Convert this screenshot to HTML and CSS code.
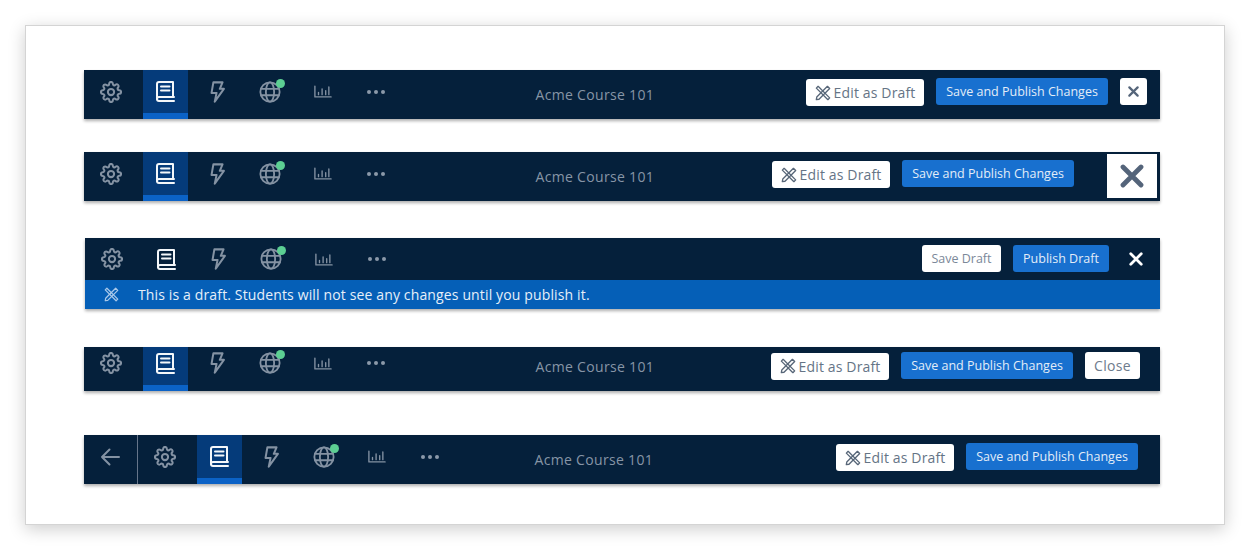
FILE: index.html
```html
<!DOCTYPE html>
<html lang="en">
<head>
    <meta charset="utf-8">
    <title>Course toolbar variations</title>
    <link rel="stylesheet" href="styles.css">
</head>
<body>
    <svg class="sprites" width="0" height="0" aria-hidden="true">
        <symbol id="i-gear" viewBox="0 0 24 24">
            <circle cx="12" cy="12" r="3.4"/>
            <path d="M19.4 15a1.65 1.65 0 0 0 .33 1.82l.06.06a2 2 0 0 1 0 2.83 2 2 0 0 1-2.83 0l-.06-.06a1.65 1.65 0 0 0-1.82-.33 1.65 1.65 0 0 0-1 1.51V21a2 2 0 0 1-2 2 2 2 0 0 1-2-2v-.09A1.65 1.65 0 0 0 9 19.4a1.65 1.65 0 0 0-1.82.33l-.06.06a2 2 0 0 1-2.83 0 2 2 0 0 1 0-2.83l.06-.06a1.65 1.65 0 0 0 .33-1.82 1.65 1.65 0 0 0-1.51-1H3a2 2 0 0 1-2-2 2 2 0 0 1 2-2h.09A1.65 1.65 0 0 0 4.6 9a1.65 1.65 0 0 0-.33-1.82l-.06-.06a2 2 0 0 1 0-2.83 2 2 0 0 1 2.83 0l.06.06a1.65 1.65 0 0 0 1.82.33H9a1.65 1.65 0 0 0 1-1.51V3a2 2 0 0 1 2-2 2 2 0 0 1 2 2v.09a1.65 1.65 0 0 0 1 1.51 1.65 1.65 0 0 0 1.82-.33l.06-.06a2 2 0 0 1 2.83 0 2 2 0 0 1 0 2.83l-.06.06a1.65 1.65 0 0 0-.33 1.82V9a1.65 1.65 0 0 0 1.51 1H21a2 2 0 0 1 2 2 2 2 0 0 1-2 2h-.09a1.65 1.65 0 0 0-1.51 1z"/>
        </symbol>
        <symbol id="i-book" viewBox="0 0 20 21">
            <path d="M19 16H4a2 2 0 0 0 0 4h15"/>
            <path d="M2 18V3a2 2 0 0 1 2-2h14v15"/>
            <path d="M6 5.500h8.500M6 9.500h8.500"/>
        </symbol>
        <symbol id="i-bolt" viewBox="0 0 16 24">
            <path d="M3.500 1.500h10l-3 7h4.500L5 22.500l2-9.500H1.500z"/>
        </symbol>
        <symbol id="i-globe" viewBox="0 0 24 24">
            <circle cx="12" cy="12" r="10.500"/>
            <path d="M2.500 8.500h19M2.500 15.500h19"/>
            <ellipse cx="12" cy="12" rx="4.500" ry="10.500"/>
        </symbol>
        <symbol id="i-chart" viewBox="0 0 20 14">
            <path d="M1 1v12h18"/>
            <path d="M5 10.500V8M9 10.500V4M13 10.500V6M16.500 10.500V2"/>
        </symbol>
        <symbol id="i-tools" viewBox="0 0 18 18">
            <path d="M3.500 1.500l13 13-2 2-13-13z"/>
            <path d="M14 1.500l2.500 2.500L4.500 16l-3 .500.500-3z"/>
        </symbol>
        <symbol id="i-close" viewBox="0 0 12 12">
            <path d="M1.500 1.500l9 9M10.500 1.500l-9 9"/>
        </symbol>
        <symbol id="i-back" viewBox="0 0 20 18">
            <path d="M19 9H2M9.500 1.500L2 9l7.500 7.500"/>
        </symbol>
    </svg>

    <div class="card">

        <div class="bar first">
            <nav class="tabs">
                <a class="tab"><svg class="ico gear"><use href="#i-gear"/></svg></a>
                <a class="tab active"><svg class="ico book"><use href="#i-book"/></svg></a>
                <a class="tab"><svg class="ico bolt"><use href="#i-bolt"/></svg></a>
                <a class="tab"><span class="globe"><svg class="ico globe-ico"><use href="#i-globe"/></svg><i class="dot"></i></span></a>
                <a class="tab"><svg class="ico chart"><use href="#i-chart"/></svg></a>
                <a class="tab"><span class="dots"><i></i><i></i><i></i></span></a>
            </nav>
            <div class="title">Acme Course 101</div>
            <div class="actions">
                <button class="btn draft"><svg class="ico tools"><use href="#i-tools"/></svg>Edit as Draft</button>
                <button class="btn primary">Save and Publish Changes</button>
                <button class="btn square"><svg class="ico x-small"><use href="#i-close"/></svg></button>
            </div>
        </div>

        <div class="bar second">
            <nav class="tabs">
                <a class="tab"><svg class="ico gear"><use href="#i-gear"/></svg></a>
                <a class="tab active"><svg class="ico book"><use href="#i-book"/></svg></a>
                <a class="tab"><svg class="ico bolt"><use href="#i-bolt"/></svg></a>
                <a class="tab"><span class="globe"><svg class="ico globe-ico"><use href="#i-globe"/></svg><i class="dot"></i></span></a>
                <a class="tab"><svg class="ico chart"><use href="#i-chart"/></svg></a>
                <a class="tab"><span class="dots"><i></i><i></i><i></i></span></a>
            </nav>
            <div class="title">Acme Course 101</div>
            <div class="actions">
                <button class="btn draft"><svg class="ico tools"><use href="#i-tools"/></svg>Edit as Draft</button>
                <button class="btn primary">Save and Publish Changes</button>
                <button class="bigclose"><svg class="ico x-big"><use href="#i-close"/></svg></button>
            </div>
        </div>

        <div class="third">
            <div class="bar editing">
                <nav class="tabs">
                    <a class="tab"><svg class="ico gear"><use href="#i-gear"/></svg></a>
                    <a class="tab current"><svg class="ico book"><use href="#i-book"/></svg></a>
                    <a class="tab"><svg class="ico bolt"><use href="#i-bolt"/></svg></a>
                    <a class="tab"><span class="globe"><svg class="ico globe-ico"><use href="#i-globe"/></svg><i class="dot"></i></span></a>
                    <a class="tab"><svg class="ico chart"><use href="#i-chart"/></svg></a>
                    <a class="tab"><span class="dots"><i></i><i></i><i></i></span></a>
                </nav>
                <div class="actions">
                    <button class="btn plain">Save Draft</button>
                    <button class="btn primary short">Publish Draft</button>
                    <svg class="ico x-white"><use href="#i-close"/></svg>
                </div>
            </div>
            <div class="notice">
                <svg class="ico tools-light"><use href="#i-tools"/></svg>
                <span>This is a draft. Students will not see any changes until you publish it.</span>
            </div>
        </div>

        <div class="bar fourth">
            <nav class="tabs">
                <a class="tab"><svg class="ico gear"><use href="#i-gear"/></svg></a>
                <a class="tab active"><svg class="ico book"><use href="#i-book"/></svg></a>
                <a class="tab"><svg class="ico bolt"><use href="#i-bolt"/></svg></a>
                <a class="tab"><span class="globe"><svg class="ico globe-ico"><use href="#i-globe"/></svg><i class="dot"></i></span></a>
                <a class="tab"><svg class="ico chart"><use href="#i-chart"/></svg></a>
                <a class="tab"><span class="dots"><i></i><i></i><i></i></span></a>
            </nav>
            <div class="title">Acme Course 101</div>
            <div class="actions">
                <button class="btn draft"><svg class="ico tools"><use href="#i-tools"/></svg>Edit as Draft</button>
                <button class="btn primary">Save and Publish Changes</button>
                <button class="btn closetext">Close</button>
            </div>
        </div>

        <div class="bar fifth">
            <a class="back"><svg class="ico arrow"><use href="#i-back"/></svg></a>
            <nav class="tabs">
                <a class="tab"><svg class="ico gear"><use href="#i-gear"/></svg></a>
                <a class="tab active"><svg class="ico book"><use href="#i-book"/></svg></a>
                <a class="tab"><svg class="ico bolt"><use href="#i-bolt"/></svg></a>
                <a class="tab"><span class="globe"><svg class="ico globe-ico"><use href="#i-globe"/></svg><i class="dot"></i></span></a>
                <a class="tab"><svg class="ico chart"><use href="#i-chart"/></svg></a>
                <a class="tab"><span class="dots"><i></i><i></i><i></i></span></a>
            </nav>
            <div class="title">Acme Course 101</div>
            <div class="actions">
                <button class="btn draft"><svg class="ico tools"><use href="#i-tools"/></svg>Edit as Draft</button>
                <button class="btn primary">Save and Publish Changes</button>
            </div>
        </div>

    </div>
</body>
</html>
```

FILE: styles.css
```css
body {
    margin: 0;
    min-height: 550px;
    background: #fff;
    font-family: "Open Sans", "Noto Sans", sans-serif;
}

.sprites {
    display: block;
    height: 0;
}

.card {
    box-sizing: border-box;
    width: 1200px;
    height: 500px;
    margin: 25px 0 0 25px;
    padding: 44px 64px 0 58px;
    background: #fff;
    border: 1px solid #d4d4d4;
    box-shadow: 0 4px 16px rgba(0, 0, 0, .2);
}

.bar {
    display: flex;
    align-items: center;
    height: 49px;
    background: #05203b;
    box-shadow: 0 2px 3px rgba(0, 0, 0, .32);
}

.second { margin-top: 33px; }
.fourth { margin-top: 38px; height: 44px; }
.fifth { margin-top: 44px; }

.third {
    margin: 37px 0 0 1px;
    box-shadow: 0 2px 3px rgba(0, 0, 0, .32);
}

.editing {
    height: 42px;
    box-shadow: none;
}

/* tabs */
.tabs {
    display: flex;
    align-self: stretch;
    gap: 8px;
    padding-left: 4.500px;
}

.tab {
    display: flex;
    align-items: center;
    justify-content: center;
    box-sizing: border-box;
    width: 45px;
    border-bottom: 6px solid transparent;
}

.fourth .tab {
    padding-bottom: 6px;
}

.editing .tab {
    border-bottom: 0;
}

.active {
    margin: 0 -1px 0 1px;
    background: #053b7a;
    border-bottom-color: #0b62c6;
}

.current {
    margin: 0 -1px 0 1px;
}

.ico {
    display: block;
    fill: none;
    stroke: #8492a3;
    stroke-width: 2;
    stroke-linecap: round;
    stroke-linejoin: round;
}

.gear { width: 22px; height: 22px; stroke-width: 2.200; }
.book { width: 20px; height: 21px; stroke: #f4f7fa; }
.bolt { width: 15px; height: 22px; stroke-width: 2.200; }
.globe-ico { width: 22px; height: 22px; stroke-width: 2; }
.chart { width: 18px; height: 13px; stroke-width: 1.500; }

.globe {
    position: relative;
    display: block;
}

.dot {
    position: absolute;
    top: -2px;
    right: -4px;
    width: 9px;
    height: 9px;
    border-radius: 50%;
    background: #5ccf93;
}

.dots {
    display: flex;
    gap: 3px;
}

.dots i {
    width: 4px;
    height: 4px;
    border-radius: 50%;
    background: #8c99a9;
}

.title {
    margin-left: 137px;
    color: #8795a6;
    font-size: 14px;
    letter-spacing: .32px;
}

.fourth .title {
    padding-bottom: 6px;
}

.fifth .title {
    margin-left: 82px;
}

/* buttons */
.actions {
    display: flex;
    align-items: center;
    margin-left: auto;
    gap: 12px;
    padding: 0 13px 6px 0;
}

.btn {
    box-sizing: border-box;
    height: 27px;
    padding: 0;
    border: 1px solid transparent;
    border-radius: 3px;
    font-family: inherit;
    white-space: nowrap;
}

.draft {
    display: flex;
    align-items: center;
    justify-content: center;
    gap: 3px;
    width: 118px;
    margin-top: 2px;
    background: #fff;
    color: #657486;
    font-size: 14px;
    letter-spacing: .15px;
}

.tools {
    width: 16px;
    height: 16px;
    stroke: #576678;
    stroke-width: 1.500;
}

.primary {
    width: 172px;
    background: #1870cf;
    color: #e3edf8;
    font-size: 12.500px;
}

.short {
    width: 96px;
}

.plain {
    width: 79px;
    background: #fff;
    color: #7b8899;
    font-size: 12.500px;
}

.square {
    display: flex;
    align-items: center;
    justify-content: center;
    width: 27px;
    background: #fff;
}

.x-small {
    width: 11px;
    height: 11px;
    stroke: #55657a;
    stroke-width: 2.400;
}

.bigclose {
    display: flex;
    align-items: center;
    justify-content: center;
    width: 50px;
    height: 44px;
    margin: 5px 0 0 21px;
    padding: 0;
    border: 0;
    background: #fff;
}

.second .actions {
    padding-right: 3px;
}

.x-big {
    width: 24px;
    height: 24px;
    stroke: #54647a;
    stroke-width: 2.400;
}

.x-white {
    width: 14px;
    height: 14px;
    margin-left: 8px;
    stroke: #fff;
    stroke-width: 2.400;
}

.editing .actions {
    padding: 0 17px 1px 0;
}

.closetext {
    width: 55px;
    background: #fff;
    color: #6d7b8c;
    font-size: 14px;
    letter-spacing: .3px;
}

.fourth .actions {
    padding: 0 20px 8px 0;
}

.fifth .actions {
    padding-right: 22px;
}

/* back button */
.back {
    display: flex;
    align-items: center;
    justify-content: center;
    box-sizing: border-box;
    width: 54px;
    padding-right: 2px;
    padding-bottom: 6px;
    align-self: stretch;
    border-right: 1px solid #66758a;
}

.arrow {
    width: 20px;
    height: 18px;
    stroke-width: 2;
}

/* draft notice */
.notice {
    display: flex;
    align-items: center;
    height: 29px;
    background: #055fb7;
    color: #e6eff9;
    font-size: 14px;
    letter-spacing: .14px;
}

.tools-light {
    width: 15px;
    height: 15px;
    margin: 0 19px 0 19px;
    stroke: #a9c8ea;
    stroke-width: 1.500;
}
```
